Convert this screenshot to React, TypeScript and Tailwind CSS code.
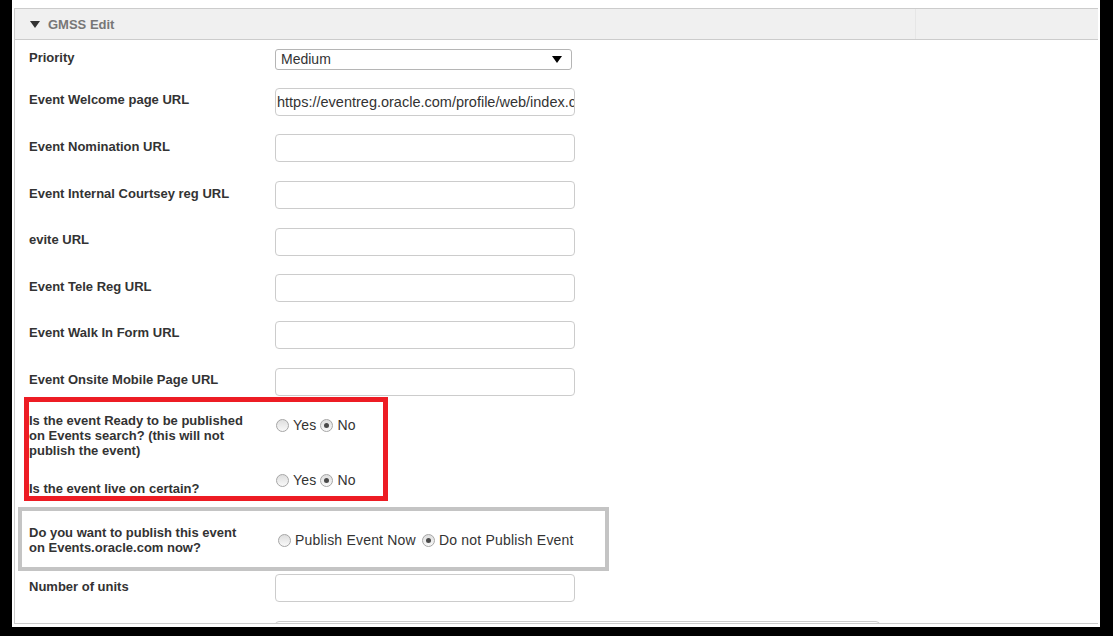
import React from "react";

const font = { fontFamily: '"Liberation Sans", Arial, sans-serif' };

function Label({ children, className = "" }: { children: React.ReactNode; className?: string }) {
  return (
    <div className={`w-[246px] shrink-0 pr-[24px] text-[13px] leading-[15px] font-bold text-[#333] ${className}`}>
      {children}
    </div>
  );
}

function TextBox({ value = "", className = "w-[300px]" }: { value?: string; className?: string }) {
  return (
    <div
      className={`h-[28px] ${className} shrink-0 overflow-hidden whitespace-nowrap rounded-[4px] border border-[#cccccc] bg-white pl-[1px] text-[14.5px] leading-[26px] text-[#333]`}
    >
      {value}
    </div>
  );
}

function Radio({ checked, label, className = "" }: { checked?: boolean; label: string; className?: string }) {
  return (
    <span className={`flex items-center ${className}`}>
      <span className="mr-[4px] flex h-[13px] w-[13px] items-center justify-center rounded-full border border-[#a6a6a6] bg-linear-to-b from-[#dedede] to-[#f9f9f9]">
        {checked && <span className="h-[5px] w-[5px] rounded-full bg-[#4a4a4a]" />}
      </span>
      <span className="text-[14px] leading-[15px] tracking-[0.2px] text-[#333]">{label}</span>
    </span>
  );
}

function InputRow({ label, value }: { label: string; value?: string }) {
  return (
    <div className="mb-[18.67px] flex items-start">
      <Label className="mt-[4.5px]">{label}</Label>
      <TextBox value={value} />
    </div>
  );
}

export default function App() {
  return (
    <div className="flex h-[636px] w-[1113px] bg-black pb-[9px] pl-[12px] pr-[13px]" style={font}>
      <div className="flex flex-1 flex-col bg-white px-[2px] pb-[3px] pt-[8px]">
        <div className="flex flex-1 flex-col overflow-hidden border-b border-l border-t border-[#cccccc]">
          {/* header */}
          <div className="flex h-[31px] shrink-0 border-b border-[#cccccc] bg-[#f0f0f0]">
            <div className="flex flex-1 items-center pl-[15px]">
              <svg width="10" height="7" viewBox="0 0 10 7" className="mr-[8px] mt-[1px]">
                <polygon points="0,0 10,0 5,7" fill="#333" />
              </svg>
              <span className="text-[13px] font-bold leading-[15px] text-[#777]">GMSS Edit</span>
            </div>
            <div className="w-[183px] border-l border-[#e6e6e6]" />
          </div>

          {/* body */}
          <div className="flex-1 overflow-hidden pl-[14px] pt-[9px]">
            {/* priority */}
            <div className="mb-[17.7px] flex items-start">
              <Label className="mt-[0.5px]">Priority</Label>
              <div className="flex h-[21px] w-[297px] items-center justify-between rounded-[3px] border border-[#b5b5b5] bg-white pl-[5px] pr-[9px] text-[14px] text-[#333]">
                <span>Medium</span>
                <svg width="10" height="7" viewBox="0 0 10 7">
                  <polygon points="0,0 10,0 5,7" fill="#000" />
                </svg>
              </div>
            </div>

            <InputRow label="Event Welcome page URL" value="https://eventreg.oracle.com/profile/web/index.c" />
            <InputRow label="Event Nomination URL" />
            <InputRow label="Event Internal Courtsey reg URL" />
            <InputRow label="evite URL" />
            <InputRow label="Event Tele Reg URL" />
            <InputRow label="Event Walk In Form URL" />
            <div className="flex items-start">
              <Label className="mt-[4.5px]">Event Onsite Mobile Page URL</Label>
              <TextBox />
            </div>

            {/* red annotated box */}
            <div className="ml-[-5px] mt-[1.3px] w-[364px] border-[5px] border-[#ed1c24]">
              <div className="flex items-start">
                <Label className="mt-[11px]">
                  Is the event Ready to be published on Events search? (this will not publish the event)
                </Label>
                <div className="ml-[1px] mt-[16px] flex items-center">
                  <Radio label="Yes" />
                  <Radio label="No" checked className="ml-[4px]" />
                </div>
              </div>
              <div className="mt-[15px] flex items-start">
                <Label className="mt-[8.5px]">Is the event live on certain?</Label>
                <div className="ml-[1px] flex items-center">
                  <Radio label="Yes" />
                  <Radio label="No" checked className="ml-[4px]" />
                </div>
              </div>
            </div>

            {/* gray box */}
            <div className="ml-[-11px] mt-[5.5px] w-[591px] border-[4px] border-[#c4c4c4] pb-[11.5px] pl-[7px]">
              <div className="flex items-start">
                <Label className="mt-[14.5px]">Do you want to publish this event on Events.oracle.com now?</Label>
                <div className="ml-[3px] mt-[22px] flex items-center">
                  <Radio label="Publish Event Now" />
                  <Radio label="Do not Publish Event" checked className="ml-[6px]" />
                </div>
              </div>
            </div>

            <div className="mb-[19px] mt-[3px] flex items-start">
              <Label className="mt-[5.5px]">Number of units</Label>
              <TextBox />
            </div>
            <div className="flex items-start">
              <Label> </Label>
              <TextBox className="w-[605px]" />
            </div>
          </div>
        </div>
      </div>
    </div>
  );
}
